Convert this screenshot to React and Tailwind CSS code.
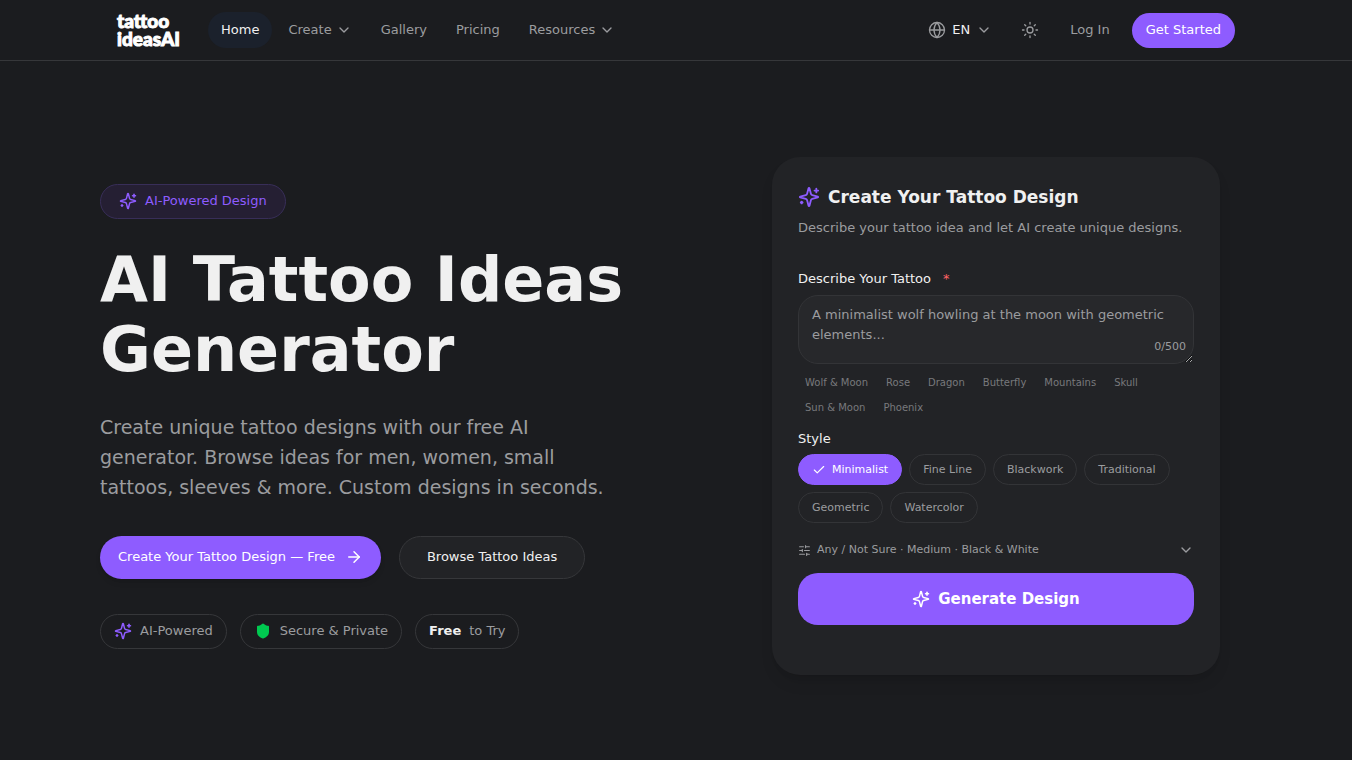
import { useState } from "react";
import { ArrowRight, Check, ChevronDown, Globe, Shield, SlidersHorizontal, Sun } from "lucide-react";
import clsx from "clsx";

const NAV_ITEMS = [
  { label: "Home", active: true },
  { label: "Create", menu: true },
  { label: "Gallery" },
  { label: "Pricing" },
  { label: "Resources", menu: true },
];

const SUGGESTIONS = [
  "Wolf & Moon",
  "Rose",
  "Dragon",
  "Butterfly",
  "Mountains",
  "Skull",
  "Sun & Moon",
  "Phoenix",
];

const STYLES = ["Minimalist", "Fine Line", "Blackwork", "Traditional", "Geometric", "Watercolor"];

const MAX_LENGTH = 500;

const SparklesIcon = ({ className }) => (
  <svg
    viewBox="0 0 24 24"
    fill="none"
    stroke="currentColor"
    strokeWidth="2"
    strokeLinecap="round"
    strokeLinejoin="round"
    aria-hidden="true"
    className={className}
  >
    <path d="M9.937 15.5A2 2 0 0 0 8.5 14.063l-6.135-1.582a.5.5 0 0 1 0-.962L8.5 9.936A2 2 0 0 0 9.937 8.5l1.582-6.135a.5.5 0 0 1 .963 0L14.063 8.5A2 2 0 0 0 15.5 9.937l6.135 1.581a.5.5 0 0 1 0 .964L15.5 14.063a2 2 0 0 0-1.437 1.437l-1.582 6.135a.5.5 0 0 1-.963 0z" />
    <path d="M20 3v4" />
    <path d="M22 5h-4" />
    <path d="M4 17v2" />
    <path d="M5 18H3" />
  </svg>
);

const Logo = () => (
  <a
    href="#"
    className="flex flex-col font-['Lato',sans-serif] text-[19px] leading-[18px] font-black text-white [-webkit-text-stroke:1px_white]"
  >
    <span>tattoo</span>
    <span>ideasAI</span>
  </a>
);

const NavItem = ({ item }) => {
  const className = clsx(
    "flex h-9 items-center gap-1 rounded-full px-[13px]",
    item.active ? "bg-[#1b212c] text-[#f0f0f0]" : "text-[#9b9c9f]"
  );

  if (item.menu) {
    return (
      <button type="button" className={className}>
        {item.label}
        <ChevronDown className="size-4" />
      </button>
    );
  }

  return (
    <a href="#" className={className}>
      {item.label}
    </a>
  );
};

const Header = () => (
  <header className="border-b border-[#36373a] text-[13px] leading-5">
    <div className="mx-auto flex h-[60px] max-w-[1152px] items-center justify-between px-[17px]">
      <div className="flex items-center gap-7">
        <Logo />
        <nav className="flex items-center gap-[3px]">
          {NAV_ITEMS.map((item) => (
            <NavItem key={item.label} item={item} />
          ))}
        </nav>
      </div>
      <div className="flex items-center">
        <button type="button" className="flex h-9 items-center gap-1.5 px-3 text-[#f0f0f0]">
          <Globe className="size-[18px] text-[#9b9c9f]" strokeWidth={1.75} />
          EN
          <ChevronDown className="size-4 text-[#9b9c9f]" />
        </button>
        <button
          type="button"
          aria-label="Toggle theme"
          className="ml-2 flex size-9 items-center justify-center text-[#9b9c9f]"
        >
          <Sun className="size-[18px]" strokeWidth={1.75} />
        </button>
        <a href="#" className="ml-2 px-[14px] text-[#9b9c9f]">
          Log In
        </a>
        <a
          href="#"
          className="ml-2 flex h-[35px] items-center rounded-full bg-[#8e5cff] px-[14px] text-white"
        >
          Get Started
        </a>
      </div>
    </div>
  </header>
);

const HeroCopy = () => (
  <div className="text-[13px] leading-5">
    <div className="inline-flex h-[35px] items-center gap-2 rounded-full border border-[#382e58] bg-[#251f33] px-[18px] text-[#8e5cff]">
      <SparklesIcon className="size-[18px]" />
      AI-Powered Design
    </div>
    <h1 className="mt-[26px] max-w-[560px] text-[62px] leading-[70px] font-bold text-[#f0f0f0]">
      AI Tattoo Ideas Generator
    </h1>
    <p className="mt-[27px] max-w-[520px] text-[19px] leading-[30px] text-[#9b9c9f]">
      Create unique tattoo designs with our free AI generator. Browse ideas for men, women, small
      tattoos, sleeves &amp; more. Custom designs in seconds.
    </p>
    <div className="mt-[34px] flex flex-wrap gap-[18px]">
      <a
        href="#design"
        className="flex h-[43px] items-center gap-2.5 rounded-full bg-[#8e5cff] px-[18px] text-white shadow-md"
      >
        Create Your Tattoo Design — Free
        <ArrowRight className="size-[18px]" />
      </a>
      <a
        href="#"
        className="flex h-[43px] items-center rounded-full border border-[#36373a] bg-[#222326] px-[27px] text-[#f0f0f0]"
      >
        Browse Tattoo Ideas
      </a>
    </div>
    <ul className="mt-[35px] flex flex-wrap gap-[13px] text-[#9b9c9f]">
      <li className="flex h-[35px] items-center gap-2 rounded-full border border-[#36373a] px-[13px]">
        <SparklesIcon className="size-[18px] text-[#8e5cff]" />
        AI-Powered
      </li>
      <li className="flex h-[35px] items-center gap-2 rounded-full border border-[#36373a] px-[13px]">
        <Shield className="size-[18px] fill-[#00c950]" strokeWidth={0} />
        Secure &amp; Private
      </li>
      <li className="flex h-[35px] items-center gap-2 rounded-full border border-[#36373a] px-[13px]">
        <strong className="font-bold text-[#f0f0f0]">Free</strong>
        to Try
      </li>
    </ul>
  </div>
);

const DesignForm = () => {
  const [prompt, setPrompt] = useState("");
  const [style, setStyle] = useState("Minimalist");

  return (
    <form
      id="design"
      onSubmit={(e) => e.preventDefault()}
      className="rounded-[28px] bg-[#222326] px-[26px] pt-[26px] pb-[50px] text-[13px] leading-5 shadow-lg"
    >
      <h2 className="flex items-center gap-2 text-[17px] leading-7 font-semibold text-[#f0f0f0]">
        <SparklesIcon className="size-[22px] text-[#8e5cff]" />
        Create Your Tattoo Design
      </h2>
      <p className="mt-[7px] text-[#9b9c9f]">
        Describe your tattoo idea and let AI create unique designs.
      </p>

      <label htmlFor="prompt" className="mt-[31px] flex gap-3 text-[#f0f0f0]">
        Describe Your Tattoo
        <span className="text-[#ff6467]">*</span>
      </label>
      <div className="relative mt-1.5">
        <textarea
          id="prompt"
          value={prompt}
          maxLength={MAX_LENGTH}
          onChange={(e) => setPrompt(e.target.value)}
          placeholder="A minimalist wolf howling at the moon with geometric elements..."
          className="block h-[69px] w-full resize-y rounded-[20px] border border-[#333437] bg-[#27282b] px-[13px] py-[9px] text-[#f0f0f0] placeholder:text-[#9b9c9f]"
        />
        <span className="absolute right-2 bottom-2 text-[11px] leading-[18px] text-[#9b9c9f]">
          {prompt.length}/{MAX_LENGTH}
        </span>
      </div>
      <div className="mt-2 flex flex-wrap gap-x-1 gap-y-[3px] text-[10px] leading-[22px] text-[#78797c]">
        {SUGGESTIONS.map((item) => (
          <button key={item} type="button" onClick={() => setPrompt(item)} className="px-[7px]">
            {item}
          </button>
        ))}
      </div>

      <fieldset className="mt-2.5">
        <legend className="text-[#f0f0f0]">Style</legend>
        <div className="mt-[5px] flex flex-wrap gap-[7px] text-[11px] leading-4">
          {STYLES.map((item) => {
            const selected = item === style;
            return (
              <button
                key={item}
                type="button"
                aria-pressed={selected}
                onClick={() => setStyle(item)}
                className={clsx(
                  "flex h-[31px] items-center gap-1.5 rounded-full border px-[13px]",
                  selected
                    ? "border-[#8e5cff] bg-[#8e5cff] text-white"
                    : "border-[#333437] text-[#9b9c9f]"
                )}
              >
                {selected && <Check className="size-3.5" />}
                {item}
              </button>
            );
          })}
        </div>
      </fieldset>

      <button
        type="button"
        className="mt-[19px] flex w-full items-center gap-1.5 text-[11px] leading-4 text-[#9b9c9f]"
      >
        <SlidersHorizontal className="size-[13px]" />
        Any / Not Sure · Medium · Black &amp; White
        <ChevronDown className="ml-auto size-4" />
      </button>
      <button
        type="submit"
        className="mt-[15px] flex h-[52px] w-full items-center justify-center gap-2 rounded-[20px] bg-[#8e5cff] text-[15px] font-semibold text-white"
      >
        <SparklesIcon className="size-[18px]" />
        Generate Design
      </button>
    </form>
  );
};

const App = () => (
  <div className="min-h-screen bg-[#1b1c1f] font-['DejaVu_Sans',sans-serif]">
    <Header />
    <main className="mx-auto grid max-w-[1184px] items-center gap-12 py-24 pr-12 pl-4 lg:grid-cols-[1fr_448px]">
      <HeroCopy />
      <DesignForm />
    </main>
  </div>
);

export default App;
